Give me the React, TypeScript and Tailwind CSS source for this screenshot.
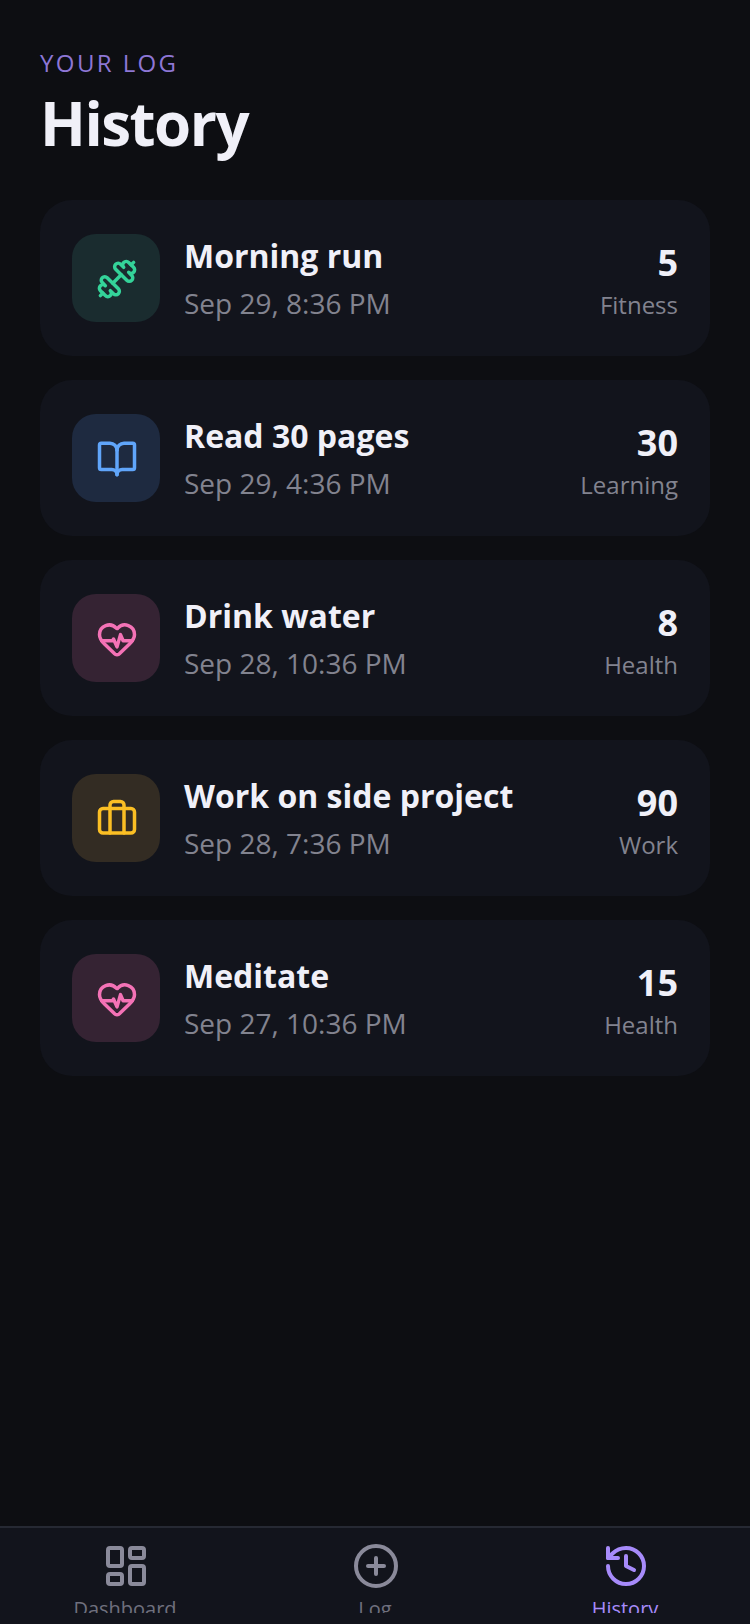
import React from 'react';
import { BookOpen, Briefcase, CirclePlus, Dumbbell, HeartPulse, History, LayoutDashboard, LucideIcon } from 'lucide-react';

interface LogEntry {
  name: string;
  date: string;
  value: number;
  category: string;
  icon: LucideIcon;
  iconClass: string;
  tileClass: string;
}

const entries: LogEntry[] = [
  { name: 'Morning run', date: 'Sep 29, 8:36 PM', value: 5, category: 'Fitness', icon: Dumbbell, iconClass: 'text-[#34d399]', tileClass: 'bg-[#1a2c2f]' },
  { name: 'Read 30 pages', date: 'Sep 29, 4:36 PM', value: 30, category: 'Learning', icon: BookOpen, iconClass: 'text-[#60a5fa]', tileClass: 'bg-[#1e2a40]' },
  { name: 'Drink water', date: 'Sep 28, 10:36 PM', value: 8, category: 'Health', icon: HeartPulse, iconClass: 'text-[#f472b6]', tileClass: 'bg-[#352333]' },
  { name: 'Work on side project', date: 'Sep 28, 7:36 PM', value: 90, category: 'Work', icon: Briefcase, iconClass: 'text-[#fbbf24]', tileClass: 'bg-[#332c23]' },
  { name: 'Meditate', date: 'Sep 27, 10:36 PM', value: 15, category: 'Health', icon: HeartPulse, iconClass: 'text-[#f472b6]', tileClass: 'bg-[#352333]' },
];

const tabs = [
  { label: 'Dashboard', icon: LayoutDashboard, active: false },
  { label: 'Log', icon: CirclePlus, active: false },
  { label: 'History', icon: History, active: true },
];

const App: React.FC = () => {
  return (
    <div className="flex h-[1624px] w-[750px] flex-col overflow-hidden bg-[#0d0e12] font-['Open_Sans',sans-serif]">
      <main className="flex-1 px-[40px] pt-[47px]">
        <p className="text-[24px] leading-[32px] tracking-[2.4px] text-[#a78bfa]/85">YOUR LOG</p>
        <h1 className="mt-[8px] text-[60px] leading-[72px] font-bold tracking-[-1.5px] text-[#f0f0f8]">History</h1>

        <div className="mt-[41px] flex flex-col gap-[24px]">
          {entries.map(entry => {
            const Icon = entry.icon;
            return (
              <div key={entry.name} className="flex h-[156px] items-center justify-between rounded-[32px] bg-[#12141c] px-[32px]">
                <div className="flex items-center gap-[24px]">
                  <div className={`flex h-[88px] w-[88px] items-center justify-center rounded-[24px] pt-[2px] pl-[1px] ${entry.tileClass}`}>
                    <Icon className={`h-[42px] w-[42px] ${entry.iconClass}`} />
                  </div>
                  <div className="pt-[1px]">
                    <div className="text-[32px] leading-[44px] font-bold text-[#f0f0f8]">{entry.name}</div>
                    <div className="mt-[5px] text-[28px] leading-[40px] text-[#82838f]">{entry.date}</div>
                  </div>
                </div>
                <div className="pt-[4px] text-right">
                  <div className="text-[36px] leading-[48px] font-bold text-[#f0f0f8]">{entry.value}</div>
                  <div className="mt-[2px] text-[24px] leading-[32px] text-[#82838f]">{entry.category}</div>
                </div>
              </div>
            );
          })}
        </div>
      </main>

      <nav className="h-[98px] border-t-2 border-[#262933] bg-[#12141c]">
        <div className="grid h-[85px] grid-cols-3 overflow-hidden pt-[14px]">
          {tabs.map(tab => {
            const Icon = tab.icon;
            return (
              <div key={tab.label} className={`flex flex-col items-center ${tab.active ? 'text-[#a78bfa]' : 'text-[#8a8a9a]'}`}>
                <Icon className="ml-[1px] h-[48px] w-[48px] shrink-0" />
                <span className={`mt-[5px] text-[20px] leading-[28px] ${tab.active ? 'text-[#a78bfa]' : 'text-[#6f707e]'}`}>{tab.label}</span>
              </div>
            );
          })}
        </div>
      </nav>
    </div>
  );
};

export default App;
